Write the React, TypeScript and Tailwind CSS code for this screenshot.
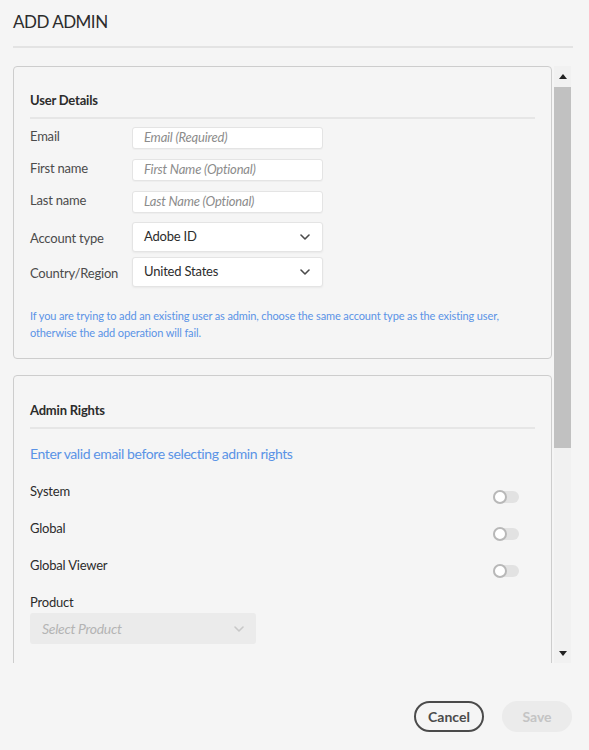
import React from "react";

const font = { fontFamily: "Lato, 'Open Sans', sans-serif" };

function Chevron({ color = "#4b4b4b" }: { color?: string }) {
  return (
    <svg width="10" height="6" viewBox="0 0 10 6" fill="none">
      <polyline points="1,1 5,5 9,1" stroke={color} strokeWidth="1.6" strokeLinecap="round" strokeLinejoin="round" />
    </svg>
  );
}

function TextRow({ label, placeholder, className = "" }: { label: string; placeholder: string; className?: string }) {
  return (
    <div className={`flex items-start ${className}`}>
      <div className="w-[102px] text-[13px] leading-[18px] tracking-[-0.2px] text-[#4b4b4b]">{label}</div>
      <div className="w-[191px] h-[22px] bg-white border border-[#e4e4e4] rounded-[3px] flex items-center pl-[11px] text-[13px] tracking-[-0.2px] italic text-[#8c8c8c] shadow-[0_1px_1px_rgba(0,0,0,0.03)]">
        {placeholder}
      </div>
    </div>
  );
}

function SelectRow({ label, value, className = "" }: { label: string; value: string; className?: string }) {
  return (
    <div className={`flex items-center ${className}`}>
      <div className="w-[102px] text-[13px] leading-[18px] tracking-[-0.2px] text-[#4b4b4b] pt-[2px]">{label}</div>
      <div className="w-[191px] h-[30px] bg-white border border-[#e4e4e4] rounded-[3px] flex items-center justify-between pl-[11px] pr-[12px] text-[13px] tracking-[-0.2px] text-[#2c2c2c] shadow-[0_1px_2px_rgba(0,0,0,0.05)]">
        <span>{value}</span>
        <Chevron />
      </div>
    </div>
  );
}

function Toggle() {
  return (
    <div className="relative w-[26px] h-[14px] mr-[16px] mt-[8px]">
      <div className="absolute left-0 right-0 top-[1px] h-[12px] rounded-full bg-[#e2e2e2]" />
      <div className="absolute left-0 top-0 w-[14px] h-[14px] rounded-full bg-white border-2 border-[#b8b8b8]" />
    </div>
  );
}

function RightRow({ label }: { label: string }) {
  return (
    <div className="flex justify-between items-start h-[37px]">
      <span className="text-[13px] leading-[18px] tracking-[-0.2px] text-[#2c2c2c]">{label}</span>
      <Toggle />
    </div>
  );
}

export default function App() {
  return (
    <div className="w-[589px] h-[750px] bg-[#f5f5f5] flex flex-col overflow-hidden" style={font}>
      {/* Header */}
      <div className="px-[13px] pt-[11px]">
        <h1 className="text-[17px] leading-[22px] tracking-[-0.5px] text-[#2c2c2c]">ADD ADMIN</h1>
        <div className="mt-[13px] h-[2px] bg-[#e3e3e3] mr-[3px]" />
      </div>

      {/* Scroll area */}
      <div className="mt-[18px] h-[597px] flex pl-[13px] pr-[18px]">
        <div className="w-[539px] overflow-hidden">
          {/* User details card */}
          <section className="border border-[#cdcdcd] rounded-[4px] px-[16px] pt-[24px] pb-[17px]">
            <h2 className="text-[13px] leading-[18px] tracking-[-0.2px] font-bold text-[#2c2c2c]">User Details</h2>
            <div className="mt-[8px] h-[2px] bg-[#e6e6e6]" />
            <TextRow className="mt-[8px]" label="Email" placeholder="Email (Required)" />
            <TextRow className="mt-[10px]" label="First name" placeholder="First Name (Optional)" />
            <TextRow className="mt-[10px]" label="Last name" placeholder="Last Name (Optional)" />
            <SelectRow className="mt-[9px]" label="Account type" value="Adobe ID" />
            <SelectRow className="mt-[5px]" label="Country/Region" value="United States" />
            <p className="mt-[20px] text-[11px] leading-[17px] tracking-[-0.12px] text-[#5a93e6]">
              If you are trying to add an existing user as admin, choose the same account type as the existing user,
              <br />
              otherwise the add operation will fail.
            </p>
          </section>

          {/* Admin rights card */}
          <section className="mt-[16px] border border-[#cdcdcd] rounded-[4px] px-[16px] pt-[25px] pb-[60px]">
            <h2 className="text-[13px] leading-[18px] tracking-[-0.2px] font-bold text-[#2c2c2c]">Admin Rights</h2>
            <div className="mt-[8px] h-[2px] bg-[#e6e6e6]" />
            <p className="mt-[15px] text-[14px] leading-[20px] tracking-[-0.4px] text-[#5a93e6]">
              Enter valid email before selecting admin rights
            </p>
            <div className="mt-[18px]">
              <RightRow label="System" />
              <RightRow label="Global" />
              <RightRow label="Global Viewer" />
              <div className="text-[13px] leading-[18px] tracking-[-0.2px] text-[#2c2c2c]">Product</div>
              <div className="mt-[2px] w-[226px] h-[31px] rounded-[3px] bg-[#ebebeb] flex items-center justify-between pl-[12px] pr-[12px] text-[14px] tracking-[-0.3px] italic text-[#b4b4b4]">
                <span>Select Product</span>
                <Chevron color="#c8c8c8" />
              </div>
            </div>
          </section>
        </div>

        {/* Scrollbar */}
        <div className="ml-[2px] w-[17px] flex flex-col bg-[#f1f1f1]">
          <div className="h-[21px] flex items-center justify-center">
            <svg width="8" height="5" viewBox="0 0 8 5">
              <polygon points="4,0 8,5 0,5" fill="#222" />
            </svg>
          </div>
          <div className="h-[361px] bg-[#c1c1c1]" />
          <div className="flex-1" />
          <div className="h-[20px] flex items-center justify-center">
            <svg width="8" height="5" viewBox="0 0 8 5">
              <polygon points="0,0 8,0 4,5" fill="#222" />
            </svg>
          </div>
        </div>
      </div>

      {/* Footer */}
      <div className="mt-[38px] flex justify-end gap-[18px] pr-[17px]">
        <button className="w-[70px] h-[31px] rounded-full border-2 border-[#4b4b4b] text-[14px] font-bold text-[#4b4b4b]">
          Cancel
        </button>
        <button className="w-[70px] h-[31px] rounded-full bg-[#ebebeb] text-[14px] font-bold text-[#c4c4c4]">
          Save
        </button>
      </div>
    </div>
  );
}
